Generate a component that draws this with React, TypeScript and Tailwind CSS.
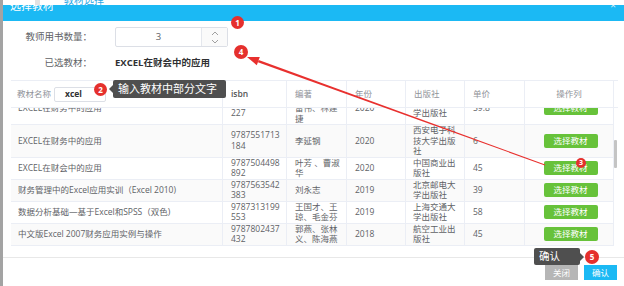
import React from 'react';

interface BookRow {
  name: string;
  isbn: string[];
  editor: string[];
  year: string;
  press: string[];
  price: string;
}

const rows: BookRow[] = [
  { name: 'EXCEL在财务中的应用', isbn: ['9787565424', '227'], editor: ['王新玲、', '雷伟、林建', '捷'], year: '2020', press: ['东北财经大', '学出版社'], price: '59.8' },
  { name: 'EXCEL在财务中的应用', isbn: ['9787551713', '184'], editor: ['李延钢'], year: '2020', press: ['西安电子科', '技大学出版', '社'], price: '6' },
  { name: 'EXCEL在财会中的应用', isbn: ['9787504498', '892'], editor: ['叶芳 、曹淑', '华'], year: '2020', press: ['中国商业出', '版社'], price: '45' },
  { name: '财务管理中的Excel应用实训（Excel 2010)', isbn: ['9787563542', '383'], editor: ['刘永志'], year: '2019', press: ['北京邮电大', '学出版社'], price: '39' },
  { name: '数据分析基础—基于Excel和SPSS（双色)', isbn: ['9787313199', '553'], editor: ['王国才、王', '琼、毛金芬'], year: '2019', press: ['上海交通大', '学出版社'], price: '58' },
  { name: '中文版Excel 2007财务应用实例与操作', isbn: ['9787802437', '432'], editor: ['郭燕、张林', '义、陈海燕'], year: '2018', press: ['航空工业出', '版社'], price: '45' },
];

function Lines({ items }: { items: string[] }) {
  return (
    <div>
      {items.map((t, i) => (
        <div key={i} className="whitespace-nowrap">{t}</div>
      ))}
    </div>
  );
}

export default function App() {
  return (
    <div className="relative flex h-[286px] w-[624px] overflow-hidden bg-white font-['Open_Sans','Noto_Sans_CJK_SC',sans-serif]">
      <div className="w-[3px] shrink-0 bg-[#a3a3a3]" />

      <div className="flex min-w-0 flex-1 flex-col">
        {/* page behind the dialog */}
        <div className="flex h-[5px] shrink-0 overflow-hidden">
          <div className="ml-[32px] mt-[0px] h-[5px] w-[5px] bg-[#e2e2e2]" />
          <span className="ml-[24px] -mt-[5px] text-[10px] leading-[10px] text-[#2aa7e6]">教材选择</span>
        </div>

        {/* dialog header */}
        <div className="flex h-[16px] shrink-0 overflow-hidden bg-[#1bb9f4]">
          <span className="ml-[7px] -mt-[6px] text-[11px] leading-[14px] text-white">选择教材</span>
          <span className="ml-auto mr-[8px] -mt-[6px] text-[10px] leading-[12px] text-[#d6eefa]">×</span>
        </div>

        {/* form */}
        <div className="flex flex-col pl-[8px]">
          <div className="mt-[6px] flex h-[20px] items-center">
            <span className="w-[81px] text-right text-[9.5px] text-[#606266]">教师用书数量：</span>
            <div className="ml-[23px] flex h-[20px] w-[113px] rounded-[2px] border border-[#dcdfe6]">
              <div className="flex flex-1 items-center justify-center text-[9.5px] text-[#606266]">3</div>
              <div className="flex w-[26px] flex-col items-center justify-center gap-[3px] border-l border-[#e4e7ed] bg-[#fafafa]">
                <svg width="8" height="5" viewBox="0 0 8 5"><polyline points="1,4 4,1 7,4" fill="none" stroke="#a0a0a0" strokeWidth="1" /></svg>
                <svg width="8" height="5" viewBox="0 0 8 5"><polyline points="1,1 4,4 7,1" fill="none" stroke="#a0a0a0" strokeWidth="1" /></svg>
              </div>
            </div>
          </div>

          <div className="mt-[6px] flex h-[20px] items-center">
            <span className="w-[81px] text-right text-[9.5px] text-[#606266]">已选教材：</span>
            <span className="ml-[23px] text-[9.5px] font-bold text-[#303133]">EXCEL在财会中的应用</span>
          </div>

          {/* table */}
          <div className="mt-[7px] flex w-[607px] flex-col text-[8.5px] text-[#606266]">
            <div className="flex h-[28px] border-y border-[#ebeef5] text-[#909399]">
              <div className="flex w-[212px] items-center border-r border-[#ebeef5] pl-[6px]">
                <span>教材名称</span>
                <div className="ml-[3px] flex h-[15px] w-[52px] items-center rounded-[2px] border border-[#dcdfe6] pl-[10px] text-[8.5px] font-bold text-[#303133]">xcel</div>
              </div>
              <div className="flex w-[64px] items-center border-r border-[#ebeef5] pl-[8px] font-semibold text-[#555]">isbn</div>
              <div className="flex w-[60px] items-center border-r border-[#ebeef5] pl-[8px]">编著</div>
              <div className="flex w-[59px] items-center border-r border-[#ebeef5] pl-[8px]">年份</div>
              <div className="flex w-[59px] items-center border-r border-[#ebeef5] pl-[8px]">出版社</div>
              <div className="flex w-[60px] items-center border-r border-[#ebeef5] pl-[8px]">单价</div>
              <div className="flex w-[89px] items-center justify-center border-r border-[#ebeef5]">操作列</div>
            </div>

            <div className="flex h-[141px] overflow-hidden">
              <div className="w-[603px]">
                <div className="-mt-[15.5px] leading-[10.5px]">
                  {rows.map((r, i) => (
                    <div key={i} className={`flex border-b border-[#ebeef5] ${i % 2 === 1 ? 'bg-[#fafafa]' : 'bg-white'}`}>
                      <div className="flex w-[212px] items-center border-r border-[#ebeef5] pl-[7px] whitespace-nowrap">{r.name}</div>
                      <div className="flex w-[64px] items-center border-r border-[#ebeef5] pl-[8px]"><Lines items={r.isbn} /></div>
                      <div className="flex w-[60px] items-center border-r border-[#ebeef5] pl-[8px]"><Lines items={r.editor} /></div>
                      <div className="flex w-[59px] items-center border-r border-[#ebeef5] pl-[8px]">{r.year}</div>
                      <div className="flex w-[59px] items-center border-r border-[#ebeef5] pl-[7px]"><Lines items={r.press} /></div>
                      <div className="flex w-[60px] items-center border-r border-[#ebeef5] pl-[8px]">{r.price}</div>
                      <div className="flex w-[89px] items-center justify-center border-r border-[#ebeef5] pl-[3px]">
                        <button className="h-[14px] w-[54px] rounded-[2px] bg-[#67c23a] text-[8.5px] leading-[14px] text-white">选择教材</button>
                      </div>
                    </div>
                  ))}
                </div>
              </div>
              <div className="w-[4px]">
                <div className="ml-[0px] mt-[32px] h-[28px] w-[3px] rounded-[1px] bg-[#c4c4c4]" />
              </div>
            </div>
          </div>
        </div>

        {/* footer */}
        <div className="mt-[8px] flex h-[29px] justify-end gap-[6px] border-t border-[#e8e8e8] pr-[7px] pt-[7px]">
          <button className="h-[15px] w-[33px] bg-[#b6b6b6] text-[8.5px] leading-[15px] text-white">关闭</button>
          <button className="h-[15px] w-[33px] bg-[#1bb9f4] text-[8.5px] leading-[15px] text-white">确认</button>
        </div>
      </div>

      {/* annotations */}
      <svg className="pointer-events-none absolute left-0 top-0" width="624" height="286">
        <polygon points="545.1,164.6 544.9,165.4 257.9,62.3 258.7,59.9" fill="#e8302e" />
        <polygon points="247,57 259.8,56.9 256.8,65.3" fill="#e8302e" />
      </svg>

      <div className="absolute left-[113px] top-[80px] flex h-[18px] w-[113px] items-center rounded-[2px] bg-[#4f4f4f] pl-[5px] text-[11px] text-white">
        <div className="absolute left-[-4px] top-[5px] h-0 w-0 border-y-[4px] border-r-[4px] border-y-transparent border-r-[#4f4f4f]" />
        输入教材中部分文字
      </div>

      <div className="absolute left-[534px] top-[248px] flex h-[17px] w-[46px] items-center rounded-[2px] bg-[#4f4f4f] pl-[5px] text-[10.5px] text-white">
        确认
        <div className="absolute right-[-4px] top-[4.5px] h-0 w-0 border-y-[4px] border-l-[4px] border-y-transparent border-l-[#4f4f4f]" />
      </div>

      <div className="absolute left-[231px] top-[16px] flex h-[13px] w-[13px] items-center justify-center rounded-full bg-[#e5302d] text-[8px] font-bold text-white">1</div>
      <div className="absolute left-[94px] top-[83px] flex h-[13px] w-[13px] items-center justify-center rounded-full bg-[#e5302d] text-[8px] font-bold text-white">2</div>
      <div className="absolute left-[576px] top-[158px] flex h-[10px] w-[10px] items-center justify-center rounded-full bg-[#e5302d] text-[7px] font-bold text-white">3</div>
      <div className="absolute left-[234px] top-[45px] flex h-[14px] w-[14px] items-center justify-center rounded-full bg-[#e5302d] text-[8px] font-bold text-white">4</div>
      <div className="absolute left-[585px] top-[250px] flex h-[14px] w-[14px] items-center justify-center rounded-full bg-[#e5302d] text-[8px] font-bold text-white">5</div>
    </div>
  );
}
